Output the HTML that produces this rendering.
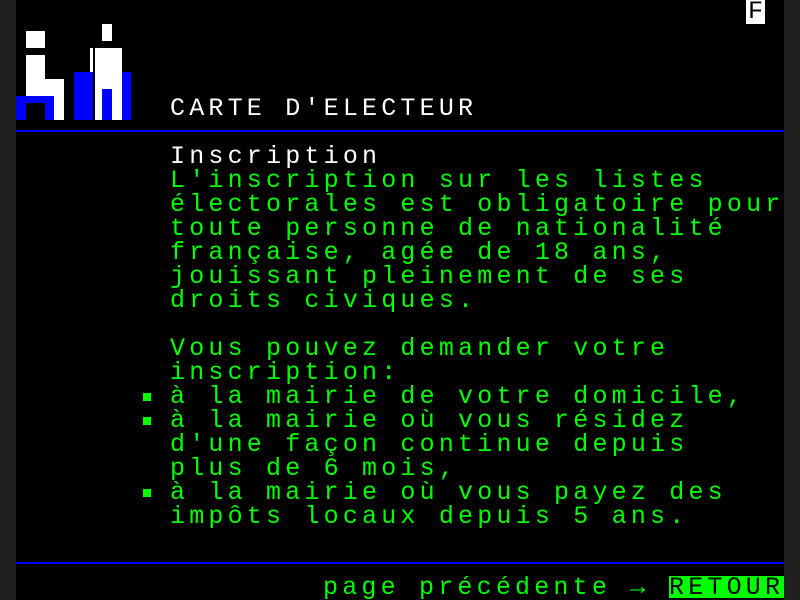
<!DOCTYPE html>
<html><head><meta charset="utf-8"><style>
html,body{margin:0;padding:0;width:800px;height:600px;overflow:hidden;}
body{background:#000;position:relative;font-family:"Liberation Mono",monospace;}
.b{position:absolute;background:#202020;top:0;height:600px;width:16px;}
.r{position:absolute;}
.t{position:absolute;left:170px;font-size:25px;line-height:24px;height:24px;letter-spacing:4.2px;white-space:pre;color:#00ff00;margin-top:1px;overflow:hidden;}
.w{color:#fff;}
.bul{position:absolute;left:143px;width:8px;height:8px;background:#00ff00;}
</style></head><body>
<div class="b" style="left:0"></div><div class="b" style="left:784px"></div>
<div class="r" style="left:26px;top:31px;width:19px;height:17px;background:#fff"></div>
<div class="r" style="left:26px;top:55px;width:19px;height:45px;background:#fff"></div>
<div class="r" style="left:45px;top:79px;width:19px;height:41px;background:#fff"></div>
<div class="r" style="left:16px;top:96px;width:38px;height:7px;background:#00f"></div>
<div class="r" style="left:16px;top:96px;width:10px;height:24px;background:#00f"></div>
<div class="r" style="left:45px;top:96px;width:9px;height:24px;background:#00f"></div>
<div class="r" style="left:102px;top:24px;width:10px;height:17px;background:#fff"></div>
<div class="r" style="left:90px;top:48px;width:3px;height:24px;background:#fff"></div>
<div class="r" style="left:95px;top:48px;width:27px;height:72px;background:#fff"></div>
<div class="r" style="left:74px;top:72px;width:19px;height:48px;background:#00f"></div>
<div class="r" style="left:122px;top:72px;width:9px;height:48px;background:#00f"></div>
<div class="r" style="left:102px;top:89px;width:10px;height:31px;background:#00f"></div>
<div class="r" style="left:746px;top:0;width:19px;height:24px;background:#fff;color:#000;font-size:25px;line-height:24px;text-align:center">F</div>
<div class="t w" style="top:96px">CARTE D'ELECTEUR</div>
<div class="r" style="left:16px;top:130px;width:768px;height:2px;background:#00f"></div>
<div class="t w" style="top:144px">Inscription</div>
<div class="t" style="top:168px">L'inscription sur les listes</div>
<div class="t" style="top:192px">électorales est obligatoire pour</div>
<div class="t" style="top:216px">toute personne de nationalité</div>
<div class="t" style="top:240px">française, agée de 18 ans,</div>
<div class="t" style="top:264px">jouissant pleinement de ses</div>
<div class="t" style="top:288px">droits civiques.</div>
<div class="t" style="top:336px">Vous pouvez demander votre</div>
<div class="t" style="top:360px">inscription:</div>
<div class="bul" style="top:393px"></div>
<div class="t" style="top:384px">à la mairie de votre domicile,</div>
<div class="bul" style="top:417px"></div>
<div class="t" style="top:408px">à la mairie où vous résidez</div>
<div class="t" style="top:432px">d'une façon continue depuis</div>
<div class="t" style="top:456px">plus de 6 mois,</div>
<div class="bul" style="top:489px"></div>
<div class="t" style="top:480px">à la mairie où vous payez des</div>
<div class="t" style="top:504px">impôts locaux depuis 5 ans.</div>
<div class="r" style="left:16px;top:562px;width:768px;height:2px;background:#00f"></div>
<div class="t" style="top:575px;left:323px">page précédente →</div>
<div class="r" style="left:669px;top:576px;width:115px;height:22px;background:#00ff00"></div>
<div class="t" style="top:575px;left:669px;color:#000;width:115px">RETOUR</div>
</body></html>
